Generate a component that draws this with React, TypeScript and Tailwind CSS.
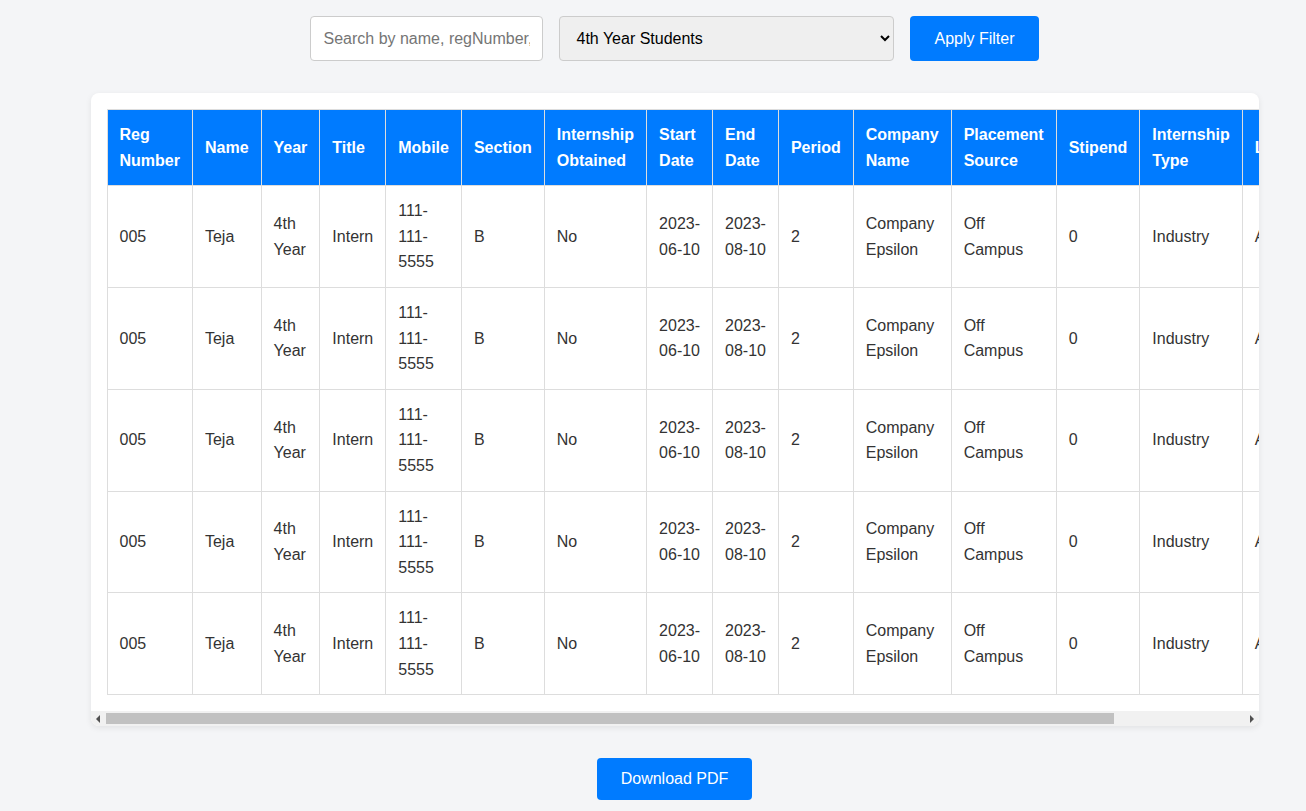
import React from "react";

const headers: string[] = [
  "Reg Number",
  "Name",
  "Year",
  "Title",
  "Mobile",
  "Section",
  "Internship Obtained",
  "Start Date",
  "End Date",
  "Period",
  "Company Name",
  "Placement Source",
  "Stipend",
  "Internship Type",
  "Location",
];

const row: string[] = [
  "005",
  "Teja",
  "4th Year",
  "Intern",
  "111-111-5555",
  "B",
  "No",
  "2023-06-10",
  "2023-08-10",
  "2",
  "Company Epsilon",
  "Off Campus",
  "0",
  "Industry",
  "Andhra",
];

const rows = [row, row, row, row, row];

function ScrollBar() {
  return (
    <div className="flex h-[15px] items-stretch bg-[#f1f1f1]">
      <div className="flex w-[15px] items-center justify-center">
        <svg width="5" height="8" viewBox="0 0 5 8">
          <polygon points="4,0 4,8 0,4" fill="#505050" />
        </svg>
      </div>
      <div className="flex flex-1 py-[2px]">
        <div className="w-[1008px] bg-[#c1c1c1]" />
      </div>
      <div className="flex w-[15px] items-center justify-center">
        <svg width="5" height="8" viewBox="0 0 5 8">
          <polygon points="1,0 1,8 5,4" fill="#505050" />
        </svg>
      </div>
    </div>
  );
}

export default function App() {
  return (
    <div
      className="min-h-screen bg-[#f4f5f7] pl-[43px] pt-4 pb-8 text-[16px] text-[#333]"
      style={{ fontFamily: '"Liberation Sans", Arial, sans-serif' }}
    >
      <div className="flex justify-center gap-4">
        <input
          type="text"
          placeholder="Search by name, regNumber, or company"
          className="w-[233px] rounded border border-[#ccc] bg-white px-3 py-3 text-[16px] leading-[normal] text-[#333] placeholder:text-[#757575] outline-none"
        />
        <select
          defaultValue="4"
          className="w-[335px] rounded border border-[#ccc] bg-[#efefef] px-3 py-3 text-[16px] leading-[normal] text-black"
        >
          <option value="all">All Students</option>
          <option value="4">4th Year Students</option>
        </select>
        <button className="rounded bg-[#007bff] px-6 py-3 text-[16px] leading-[normal] text-white">
          Apply Filter
        </button>
      </div>

      <div className="mx-auto mt-8 w-[1168px] overflow-hidden rounded-lg bg-white shadow-[0_2px_6px_rgba(0,0,0,0.08)]">
        <div className="overflow-hidden p-4">
          <table className="w-full border-collapse text-left leading-[1.6]">
            <thead>
              <tr>
                {headers.map((h, i) => (
                  <th
                    key={h}
                    className={
                      "border border-[#ddd] bg-[#007bff] px-3 py-3 font-bold text-white" +
                      (i === headers.length - 1 ? " min-w-[151px]" : "")
                    }
                  >
                    {h}
                  </th>
                ))}
              </tr>
            </thead>
            <tbody>
              {rows.map((r, ri) => (
                <tr key={ri}>
                  {r.map((c, ci) => (
                    <td key={ci} className="border border-[#ddd] px-3 py-3 align-middle text-[#333]">
                      {c}
                    </td>
                  ))}
                </tr>
              ))}
            </tbody>
          </table>
        </div>
        <ScrollBar />
      </div>

      <div className="mt-8 flex justify-center">
        <button className="rounded bg-[#007bff] px-6 py-3 text-[16px] leading-[normal] text-white">
          Download PDF
        </button>
      </div>
    </div>
  );
}
